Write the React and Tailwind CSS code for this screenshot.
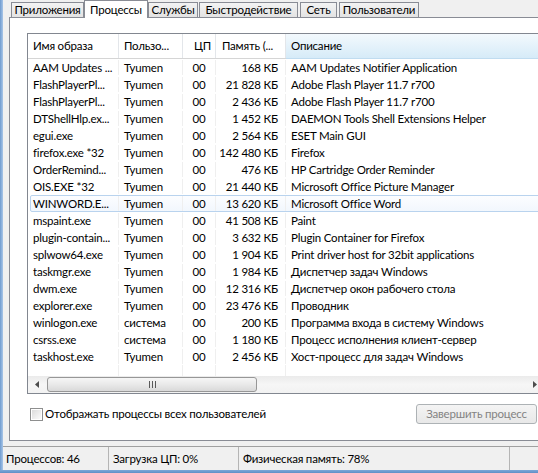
import React from "react";

const rows = [
  ["AAM Updates ...", "Tyumen", "00", "168 КБ", "AAM Updates Notifier Application"],
  ["FlashPlayerPl...", "Tyumen", "00", "21 828 КБ", "Adobe Flash Player 11.7 r700"],
  ["FlashPlayerPl...", "Tyumen", "00", "2 436 КБ", "Adobe Flash Player 11.7 r700"],
  ["DTShellHlp.ex...", "Tyumen", "00", "1 452 КБ", "DAEMON Tools Shell Extensions Helper"],
  ["egui.exe", "Tyumen", "00", "2 564 КБ", "ESET Main GUI"],
  ["firefox.exe *32", "Tyumen", "00", "142 480 КБ", "Firefox"],
  ["OrderRemind...", "Tyumen", "00", "476 КБ", "HP Cartridge Order Reminder"],
  ["OIS.EXE *32", "Tyumen", "00", "21 440 КБ", "Microsoft Office Picture Manager"],
  ["WINWORD.E...", "Tyumen", "00", "13 620 КБ", "Microsoft Office Word"],
  ["mspaint.exe", "Tyumen", "00", "41 508 КБ", "Paint"],
  ["plugin-contain...", "Tyumen", "00", "3 632 КБ", "Plugin Container for Firefox"],
  ["splwow64.exe", "Tyumen", "00", "1 904 КБ", "Print driver host for 32bit applications"],
  ["taskmgr.exe", "Tyumen", "00", "1 984 КБ", "Диспетчер задач Windows"],
  ["dwm.exe", "Tyumen", "00", "12 316 КБ", "Диспетчер окон рабочего стола"],
  ["explorer.exe", "Tyumen", "00", "23 476 КБ", "Проводник"],
  ["winlogon.exe", "система", "00", "200 КБ", "Программа входа в систему Windows"],
  ["csrss.exe", "система", "00", "1 180 КБ", "Процесс исполнения клиент-сервер"],
  ["taskhost.exe", "Tyumen", "00", "2 456 КБ", "Хост-процесс для задач Windows"],
];

const Tab = ({ label, w, active, className = "" }) =>
  active ? (
    <div className={`h-[18px] ${w} bg-white border border-b-0 border-[#898c95] flex items-center justify-center relative z-10 ${className}`}>
      {label}
    </div>
  ) : (
    <div className={`h-[15px] mb-[1px] ${w} border border-b-0 border-[#898c95] bg-gradient-to-b from-[#f3f3f3] to-[#e3e3e3] flex items-center justify-center ${className}`}>
      {label}
    </div>
  );

const sep = "border-r border-[#efefef]";

const Row = ({ r, sel }) => (
  <div
    className={`h-[17px] ml-[2px] flex items-center border rounded-[2px] ${
      sel ? "border-[#b9d3ee] bg-gradient-to-b from-[#fcfdff] to-[#f2f7fd]" : "border-transparent"
    }`}
  >
    <div className={`w-[88px] h-full flex items-center pl-[2px] whitespace-nowrap overflow-hidden ${sep}`}>{r[0]}</div>
    <div className={`w-[64px] h-full flex items-center pl-[5px] whitespace-nowrap ${sep}`}>{r[1]}</div>
    <div className={`w-[33px] h-full flex items-center justify-center ${sep}`}>{r[2]}</div>
    <div className={`w-[70px] h-full flex items-center justify-end pr-[7px] whitespace-nowrap ${sep}`}>{r[3]}</div>
    <div className="flex-1 h-full flex items-center pl-[5px] whitespace-nowrap">{r[4]}</div>
  </div>
);

export default function App() {
  return (
    <div className="w-[538px] h-[473px] overflow-hidden flex flex-col bg-[#f0f0f0] text-[11.5px] tracking-[-0.2px] text-black font-['Lato','Noto_Sans',sans-serif] leading-none">
      <div className="flex flex-1 min-h-0">
        <div className="w-[3px] bg-gradient-to-r from-[#6f9bcf] to-[#a9c6e8]" />
        <div className="flex-1 flex flex-col min-w-0">
          <div className="pl-[6px]">
            {/* tabs */}
            <div className="h-[18px] -mb-[1px] flex items-end pl-[2px]">
              <Tab label="Приложения" w="w-[73px]" />
              <Tab label="Процессы" w="w-[64px]" active />
              <Tab label="Службы" w="w-[50px]" />
              <Tab label="Быстродействие" w="w-[99px]" className="ml-[1px]" />
              <Tab label="Сеть" w="w-[37px]" className="ml-[2px]" />
              <Tab label="Пользователи" w="w-[80px]" className="ml-[2px]" />
            </div>

            {/* panel */}
            <div className="w-[580px] h-[424px] bg-white border border-[#898c95] pl-[17px] pt-[15px]">
              <div className="w-[517px] h-[361px] border border-[#828790] flex flex-col">
                {/* header */}
                <div className="h-[25px] flex border-b border-[#d5d5d5]">
                  <div className="w-[91px] flex items-center pl-[5px] border-r border-[#e3e6ea]">Имя образа</div>
                  <div className="w-[64px] flex items-center pl-[5px] border-r border-[#e3e6ea]">Пользо...</div>
                  <div className="w-[33px] flex items-center justify-end pr-[4px] border-r border-[#e3e6ea]">ЦП</div>
                  <div className="w-[70px] flex items-center pl-[6px] border-r border-[#e3e6ea] whitespace-nowrap overflow-hidden">Память (...</div>
                  <div className="flex-1 flex items-center pl-[5px] bg-gradient-to-b from-[#f3f9fd] to-[#d6ebf8] border-b border-[#c0dcf0] -mb-[1px]">
                    Описание
                  </div>
                </div>

                {/* rows */}
                {rows.map((r, i) => (
                  <Row key={i} r={r} sel={i === 8} />
                ))}

                {/* filler */}
                <div className="flex-1 ml-[3px] flex">
                  <div className={`w-[88px] ${sep}`} />
                  <div className={`w-[64px] ${sep}`} />
                  <div className={`w-[33px] ${sep}`} />
                  <div className={`w-[70px] ${sep}`} />
                </div>

                {/* horizontal scrollbar */}
                <div className="h-[17px] flex items-center bg-gradient-to-b from-[#ebebeb] via-[#f6f6f6] to-[#f2f2f2]">
                  <div className="w-[17px] h-full flex items-center justify-center">
                    <svg width="4" height="7" viewBox="0 0 4 7">
                      <polygon points="4,0 4,7 0,3.5" fill="#4d4d4d" />
                    </svg>
                  </div>
                  <div className="ml-[2px] w-[210px] h-[15px] rounded-[3px] border border-[#979797] bg-gradient-to-b from-[#f6f6f6] via-[#e9e9e9] to-[#d9d9d9] flex items-center justify-center">
                    <svg width="7" height="7" viewBox="0 0 7 7">
                      <rect x="0" y="0" width="1" height="7" fill="#5a5a5a" />
                      <rect x="3" y="0" width="1" height="7" fill="#5a5a5a" />
                      <rect x="6" y="0" width="1" height="7" fill="#5a5a5a" />
                    </svg>
                  </div>
                  <div className="flex-1" />
                  <div className="w-[17px] h-full flex items-center justify-center">
                    <svg width="4" height="7" viewBox="0 0 4 7">
                      <polygon points="0,0 0,7 4,3.5" fill="#4d4d4d" />
                    </svg>
                  </div>
                </div>
              </div>

              {/* bottom controls */}
              <div className="w-[510px] h-[20px] mt-[10px] flex items-center">
                <div className="ml-[3px] w-[13px] h-[13px] border border-[#8e8f8f] p-[1px] bg-white">
                  <div className="w-full h-full bg-gradient-to-br from-[#dcdcdc] to-[#fbfbfb]" />
                </div>
                <span className="ml-[2px] whitespace-nowrap">Отображать процессы всех пользователей</span>
                <div className="ml-auto w-[121px] h-[20px] rounded-[3px] border border-[#adb2b5] bg-gradient-to-b from-[#f4f4f4] to-[#e8e8e8] flex items-center justify-center text-[#838383] whitespace-nowrap">
                  Завершить процесс
                </div>
              </div>
            </div>
          </div>

          {/* status bar */}
          <div className="mt-[5px] h-[24px] border-t border-[#a0a0a0] flex items-center whitespace-nowrap">
            <div className="w-[106px] h-full flex items-center pl-[3px] border-r border-[#b5b5b5]">Процессов: 46</div>
            <div className="w-[130px] h-full flex items-center pl-[4px] border-r border-[#b5b5b5]">Загрузка ЦП: 0%</div>
            <div className="w-[271px] h-full flex items-center pl-[4px] border-r border-[#b5b5b5]">Физическая память: 78%</div>
            <div className="flex-1" />
          </div>
        </div>
      </div>
      <div className="h-[3px] bg-gradient-to-b from-[#7ea7d8] to-[#5f8fc6]" />
    </div>
  );
}
